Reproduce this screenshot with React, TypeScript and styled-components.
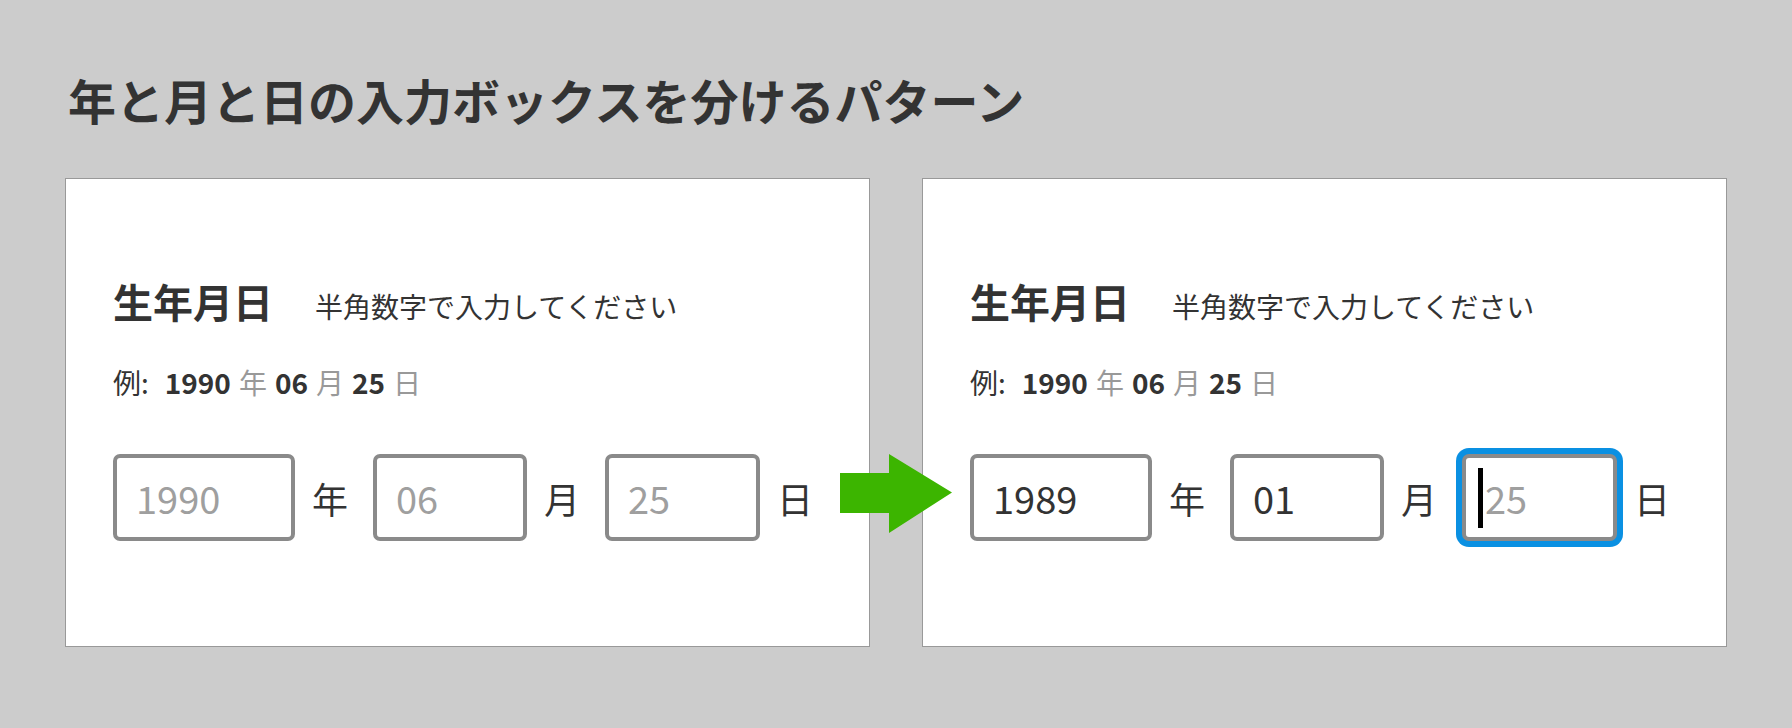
import { Fragment } from "react";
import styled, { createGlobalStyle } from "styled-components";

const GlobalStyle = createGlobalStyle`
  html, body {
    margin: 0;
    padding: 0;
    background: #cccccc;
  }
  body {
    font-family: "Noto Sans CJK JP", "Noto Sans", sans-serif;
    color: #333333;
  }
`;

const Page = styled.div`
  position: relative;
  box-sizing: border-box;
  width: 1792px;
  height: 728px;
  padding: 75px 65px 0;
`;

const Title = styled.h1`
  margin: 0 0 0 3px;
  font-size: 48px;
  font-weight: 700;
  line-height: 1;
  color: #333333;
`;

const Cards = styled.div`
  display: grid;
  grid-template-columns: 805px 805px;
  gap: 52px;
  margin-top: 55px;
`;

const Card = styled.section`
  box-sizing: border-box;
  height: 469px;
  padding: 102px 47px 0;
  background: #ffffff;
  border: 1px solid #999999;
`;

const HeadRow = styled.div`
  display: flex;
  align-items: baseline;
`;

const Label = styled.h2`
  margin: 0;
  font-size: 40px;
  font-weight: 700;
  line-height: 1;
`;

const Hint = styled.span`
  margin-left: 42px;
  font-size: 28px;
  line-height: 1;
`;

const Example = styled.p`
  display: flex;
  align-items: baseline;
  gap: 8px;
  margin: 47px 0 0;
  font-size: 28px;
  line-height: 1;
`;

const Lead = styled.span`
  margin-right: 8px;
`;

const Num = styled.b`
  font-weight: 700;
`;

const Unit = styled.span`
  color: #999999;
`;

const FieldRow = styled.div`
  display: flex;
  align-items: center;
  margin-top: 58px;
`;

const FieldWrap = styled.div`
  position: relative;
  display: flex;
`;

const Field = styled.input<{ $width: number; $focused?: boolean }>`
  box-sizing: border-box;
  width: ${(p) => p.$width}px;
  height: 87px;
  margin: 0;
  padding: 0 0 0 19px;
  border: 4px solid #8a8a8a;
  border-radius: 7px;
  background: #ffffff;
  font-family: "Noto Sans CJK JP", "Noto Sans", sans-serif;
  font-size: 38px;
  color: #333333;
  outline: none;
  box-shadow: ${(p) => (p.$focused ? "0 0 0 6px #0a90e2" : "none")};
  &::placeholder {
    color: #9f9f9f;
    opacity: 1;
  }
`;

const Caret = styled.span`
  position: absolute;
  left: 16px;
  top: 14px;
  width: 5px;
  height: 60px;
  background: #000000;
`;

const FieldUnit = styled.span`
  margin: 0 25px 0 17px;
  font-size: 36px;
  line-height: 1;
  color: #333333;
`;

const Arrow = styled.svg`
  position: absolute;
  left: 840px;
  top: 454px;
`;

type Part = { width: number; value?: string; placeholder: string; unit: string; focused?: boolean };

function DateFields({ parts }: { parts: Part[] }) {
  return (
    <FieldRow>
      {parts.map((p) => (
        <Fragment key={p.unit}>
          <FieldWrap>
            <Field
              $width={p.width}
              $focused={p.focused}
              readOnly
              value={p.value ?? ""}
              placeholder={p.placeholder}
            />
            {p.focused && <Caret />}
          </FieldWrap>
          <FieldUnit>{p.unit}</FieldUnit>
        </Fragment>
      ))}
    </FieldRow>
  );
}

function BirthdayCard({ parts }: { parts: Part[] }) {
  return (
    <Card>
      <HeadRow>
        <Label>生年月日</Label>
        <Hint>半角数字で入力してください</Hint>
      </HeadRow>
      <Example>
        <Lead>例:</Lead>
        <Num>1990</Num>
        <Unit>年</Unit>
        <Num>06</Num>
        <Unit>月</Unit>
        <Num>25</Num>
        <Unit>日</Unit>
      </Example>
      <DateFields parts={parts} />
    </Card>
  );
}

export default function App() {
  return (
    <>
      <GlobalStyle />
      <Page>
        <Title>年と月と日の入力ボックスを分けるパターン</Title>
        <Cards>
          <BirthdayCard
            parts={[
              { width: 182, placeholder: "1990", unit: "年" },
              { width: 154, placeholder: "06", unit: "月" },
              { width: 155, placeholder: "25", unit: "日" },
            ]}
          />
          <BirthdayCard
            parts={[
              { width: 182, value: "1989", placeholder: "1990", unit: "年" },
              { width: 154, value: "01", placeholder: "06", unit: "月" },
              { width: 155, placeholder: "25", unit: "日", focused: true },
            ]}
          />
        </Cards>
        <Arrow width="112" height="79" viewBox="0 0 112 79">
          <polygon points="0,19 49,19 49,0 112,38.5 49,79 49,59 0,59" fill="#3cb500" />
        </Arrow>
      </Page>
    </>
  );
}
